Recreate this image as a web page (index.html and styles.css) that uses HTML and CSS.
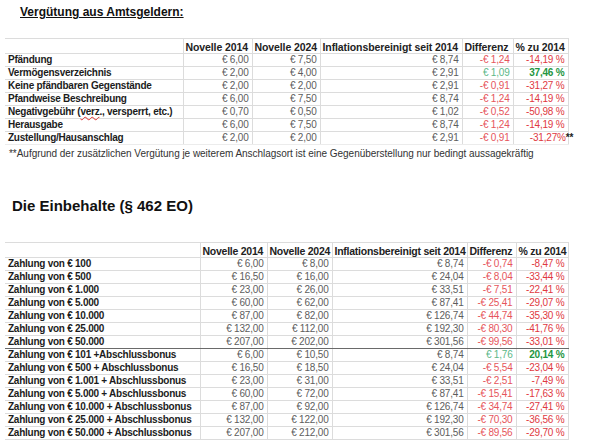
FILE: index.html
```html
<!DOCTYPE html>
<html lang="de">
<head>
<meta charset="utf-8">
<title>Vergütung aus Amtsgeldern</title>
<link rel="stylesheet" href="styles.css">
</head>
<body>
<main class="page">
  <h2 class="title1">Vergütung aus Amtsgeldern:</h2>
  <table class="grid t1">
    <colgroup>
      <col class="a1"><col class="a2"><col class="a3"><col class="a4"><col class="a5"><col class="a6">
    </colgroup>
    <thead>
      <tr><th></th><th>Novelle 2014</th><th>Novelle 2024</th><th>Inflationsbereinigt seit 2014</th><th>Differenz</th><th>% zu 2014</th></tr>
    </thead>
    <tbody>
      <tr><td class="lbl">Pfändung</td><td>€ 6,00</td><td>€ 7,50</td><td>€ 8,74</td><td class="neg">-€ 1,24</td><td class="pneg">-14,19 %</td></tr>
      <tr><td class="lbl">Vermögensverzeichnis</td><td>€ 2,00</td><td>€ 4,00</td><td>€ 2,91</td><td class="pos">€ 1,09</td><td class="ppos">37,46 %</td></tr>
      <tr><td class="lbl">Keine pfändbaren Gegenstände</td><td>€ 2,00</td><td>€ 2,00</td><td>€ 2,91</td><td class="neg">-€ 0,91</td><td class="pneg">-31,27 %</td></tr>
      <tr><td class="lbl">Pfandweise Beschreibung</td><td>€ 6,00</td><td>€ 7,50</td><td>€ 8,74</td><td class="neg">-€ 1,24</td><td class="pneg">-14,19 %</td></tr>
      <tr><td class="lbl">Negativgebühr (<span class="spell">verz</span>., versperrt, etc.)</td><td>€ 0,70</td><td>€ 0,50</td><td>€ 1,02</td><td class="neg">-€ 0,52</td><td class="pneg">-50,98 %</td></tr>
      <tr><td class="lbl">Herausgabe</td><td>€ 6,00</td><td>€ 7,50</td><td>€ 8,74</td><td class="neg">-€ 1,24</td><td class="pneg">-14,19 %</td></tr>
      <tr class="last"><td class="lbl">Zustellung/Hausanschlag</td><td>€ 2,00</td><td>€ 2,00</td><td>€ 2,91</td><td class="neg">-€ 0,91</td><td class="pneg star">-31,27%<span class="stars">**</span></td></tr>
    </tbody>
  </table>
  <p class="note">**Aufgrund der zusätzlichen Vergütung je weiterem Anschlagsort ist eine Gegenüberstellung nur bedingt aussagekräftig</p>

  <h2 class="title2">Die Einbehalte (§ 462 EO)</h2>
  <table class="grid t2">
    <colgroup>
      <col class="b1"><col class="b2"><col class="b3"><col class="b4"><col class="b5"><col class="b6">
    </colgroup>
    <thead>
      <tr><th></th><th>Novelle 2014</th><th>Novelle 2024</th><th>Inflationsbereinigt seit 2014</th><th>Differenz</th><th>% zu 2014</th></tr>
    </thead>
    <tbody>
      <tr><td class="lbl">Zahlung von € 100</td><td>€ 6,00</td><td>€ 8,00</td><td>€ 8,74</td><td class="neg">-€ 0,74</td><td class="pneg">-8,47 %</td></tr>
      <tr><td class="lbl">Zahlung von € 500</td><td>€ 16,50</td><td>€ 16,00</td><td>€ 24,04</td><td class="neg">-€ 8,04</td><td class="pneg">-33,44 %</td></tr>
      <tr><td class="lbl">Zahlung von € 1.000</td><td>€ 23,00</td><td>€ 26,00</td><td>€ 33,51</td><td class="neg">-€ 7,51</td><td class="pneg">-22,41 %</td></tr>
      <tr><td class="lbl">Zahlung von € 5.000</td><td>€ 60,00</td><td>€ 62,00</td><td>€ 87,41</td><td class="neg">-€ 25,41</td><td class="pneg">-29,07 %</td></tr>
      <tr><td class="lbl">Zahlung von € 10.000</td><td>€ 87,00</td><td>€ 82,00</td><td>€ 126,74</td><td class="neg">-€ 44,74</td><td class="pneg">-35,30 %</td></tr>
      <tr><td class="lbl">Zahlung von € 25.000</td><td>€ 132,00</td><td>€ 112,00</td><td>€ 192,30</td><td class="neg">-€ 80,30</td><td class="pneg">-41,76 %</td></tr>
      <tr class="split"><td class="lbl">Zahlung von € 50.000</td><td>€ 207,00</td><td>€ 202,00</td><td>€ 301,56</td><td class="neg">-€ 99,56</td><td class="pneg">-33,01 %</td></tr>
      <tr><td class="lbl">Zahlung von € 101 +Abschlussbonus</td><td>€ 6,00</td><td>€ 10,50</td><td>€ 8,74</td><td class="pos">€ 1,76</td><td class="ppos">20,14 %</td></tr>
      <tr><td class="lbl">Zahlung von € 500 + Abschlussbonus</td><td>€ 16,50</td><td>€ 18,50</td><td>€ 24,04</td><td class="neg">-€ 5,54</td><td class="pneg">-23,04 %</td></tr>
      <tr><td class="lbl">Zahlung von € 1.001 + Abschlussbonus</td><td>€ 23,00</td><td>€ 31,00</td><td>€ 33,51</td><td class="neg">-€ 2,51</td><td class="pneg">-7,49 %</td></tr>
      <tr><td class="lbl">Zahlung von € 5.000 + Abschlussbonus</td><td>€ 60,00</td><td>€ 72,00</td><td>€ 87,41</td><td class="neg">-€ 15,41</td><td class="pneg">-17,63 %</td></tr>
      <tr><td class="lbl">Zahlung von € 10.000 + Abschlussbonus</td><td>€ 87,00</td><td>€ 92,00</td><td>€ 126,74</td><td class="neg">-€ 34,74</td><td class="pneg">-27,41 %</td></tr>
      <tr><td class="lbl">Zahlung von € 25.000 + Abschlussbonus</td><td>€ 132,00</td><td>€ 122,00</td><td>€ 192,30</td><td class="neg">-€ 70,30</td><td class="pneg">-36,56 %</td></tr>
      <tr><td class="lbl">Zahlung von € 50.000 + Abschlussbonus</td><td>€ 207,00</td><td>€ 212,00</td><td>€ 301,56</td><td class="neg">-€ 89,56</td><td class="pneg">-29,70 %</td></tr>
    </tbody>
  </table>
</main>
</body>
</html>
```

FILE: styles.css
```css
html, body {
  margin: 0;
  padding: 0;
  background: #ffffff;
}

body {
  font-family: "Liberation Sans", Arial, sans-serif;
  color: #1a1a1a;
}

.page {
  width: 601px;
  height: 443px;
  overflow: hidden;
  padding-top: 5px;
  box-sizing: border-box;
}

.title1 {
  margin: 0 0 19px 20px;
  font-size: 12px;
  line-height: 14px;
  font-weight: bold;
  text-decoration: underline;
  text-underline-offset: 1px;
  color: #111;
}

.title2 {
  margin: 37px 0 27px 12px;
  font-size: 15px;
  line-height: 18px;
  font-weight: bold;
  color: #111;
}

.note {
  margin: 3px 0 0 9px;
  font-size: 10px;
  line-height: 12px;
  letter-spacing: -0.03px;
  color: #333;
  white-space: nowrap;
}

.grid {
  margin-left: 5px;
  width: 563px;
  border-collapse: collapse;
  table-layout: fixed;
}

.grid th,
.grid td {
  border: 1px solid #dcdcdc;
  padding: 0 3px 0 2px;
  white-space: nowrap;
  overflow: visible;
}

.grid th {
  height: 13px;
  line-height: 12px;
  font-size: 10.5px;
  letter-spacing: -0.1px;
  font-weight: bold;
  text-align: left;
  color: #222;
  padding: 1px 0 0 2px;
  vertical-align: middle;
}

.t2 th {
  letter-spacing: -0.25px;
}

.grid th:first-child {
  border-left: none;
}

.grid td {
  height: 12px;
  line-height: 12px;
  font-size: 10px;
  letter-spacing: -0.2px;
  text-align: right;
  color: #5d5d5d;
}

.grid td.lbl {
  text-align: left;
  font-weight: bold;
  color: #1c1c1c;
  letter-spacing: -0.25px;
  border-left: none;
  padding-left: 3px;
}

.grid td:last-child,
.grid th:last-child {
  border-right: 1px solid #dcdcdc;
}

.neg { color: #e6555b !important; }
.pneg { color: #e0393f !important; }
.pos { color: #5cb888 !important; }
.ppos { color: #23963f !important; font-weight: bold; }

.spell {
  text-decoration: underline wavy #e03030;
  text-decoration-thickness: 1px;
  text-underline-offset: 1px;
}

.star { padding-right: 0 !important; }
.stars {
  color: #222;
  font-weight: bold;
  letter-spacing: 0;
  margin-right: -6px;
}

.t1 .last td { border-bottom-color: #ececec; }

.split td { border-bottom: 1.5px solid #6a6a6a; }

.a1 { width: 178px; }
.a2 { width: 69px; }
.a3 { width: 68px; }
.a4 { width: 142px; }
.a5 { width: 51px; }
.a6 { width: 55px; }

.b1 { width: 195px; }
.b2 { width: 67px; }
.b3 { width: 65px; }
.b4 { width: 135px; }
.b5 { width: 49px; }
.b6 { width: 52px; }
```
